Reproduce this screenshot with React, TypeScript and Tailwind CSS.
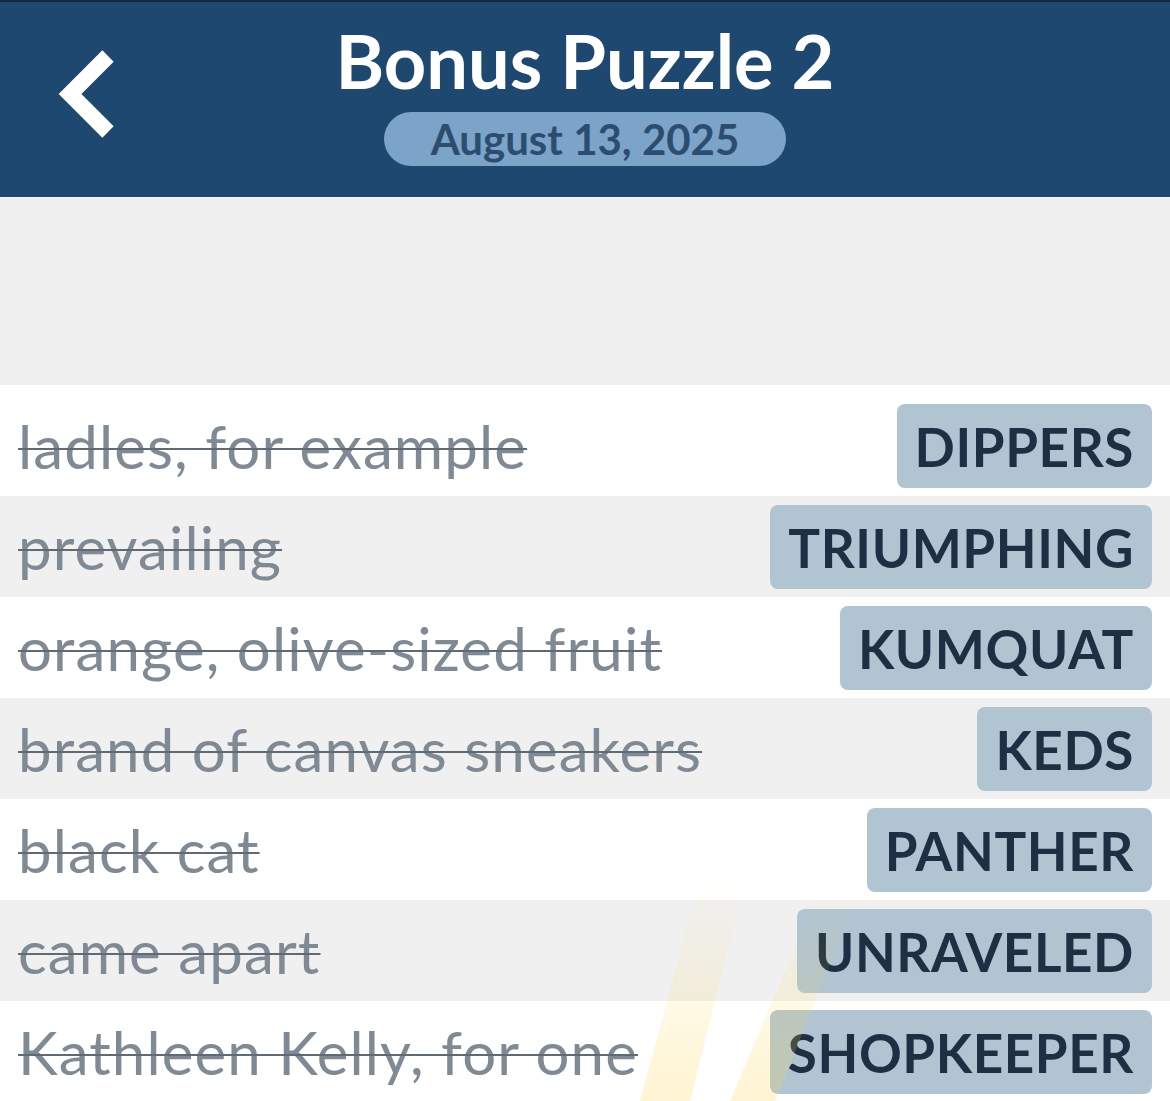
const clues = [
  { clue: "ladles, for example", answer: "DIPPERS" },
  { clue: "prevailing", answer: "TRIUMPHING" },
  { clue: "orange, olive-sized fruit", answer: "KUMQUAT" },
  { clue: "brand of canvas sneakers", answer: "KEDS" },
  { clue: "black cat", answer: "PANTHER" },
  { clue: "came apart", answer: "UNRAVELED" },
  { clue: "Kathleen Kelly, for one", answer: "SHOPKEEPER" },
];

const ClueRow = ({ clue, answer, index }: { clue: string; answer: string; index: number }) => {
  return (
    <div
      className={`flex items-center justify-between pl-[18px] pr-[18px] pb-2 ${index % 2 === 0 ? "bg-white" : "bg-[#f0f0f0]"
        } ${index === 0 ? "pt-[19px]" : "pt-[9px]"}`}
    >
      <span className="text-[60px] leading-none text-[#7f8a95] line-through decoration-[#5f6a75] decoration-2 tracking-[1.1px]">
        {clue}
      </span>
      <span className="h-[84px] flex items-center px-[18px] rounded-lg bg-[#b0c4d2] text-[#1d2f43] text-[53px] font-bold leading-none tracking-[0.6px]">
        {answer}
      </span>
    </div>
  );
};

export default function App() {
  return (
    <div className="relative w-[1170px] h-[1101px] overflow-hidden bg-[#f0f0f0] font-['Lato',sans-serif]">
      <header className="relative h-[197px] bg-[#1f4870] border-t-2 border-[#102a44] flex flex-col items-center">
        <button className="absolute left-[56px] top-[44px]">
          <svg width="66" height="96" viewBox="0 0 66 96" fill="none">
            <polyline points="52,10 14,48 52,86" stroke="white" strokeWidth="16" strokeLinejoin="miter" />
          </svg>
        </button>
        <h1 className="mt-[22px] text-[74px] leading-none font-bold text-white">Bonus Puzzle 2</h1>
        <div className="mt-[14px] w-[402px] h-[54px] rounded-full bg-[#7ba4c8] flex items-center justify-center text-[42px] font-bold text-[#2d4d6f] leading-none">
          August 13, 2025
        </div>
      </header>

      <div className="h-[188px]" />

      <div className="flex flex-col">
        {clues.map((c, i) => (
          <ClueRow key={c.clue} clue={c.clue} answer={c.answer} index={i} />
        ))}
      </div>

      <svg className="absolute left-0 top-[860px] pointer-events-none" width="1170" height="241" viewBox="0 0 1170 241">
        <defs>
          <linearGradient id="wm" x1="0" y1="0" x2="0" y2="1">
            <stop offset="0" stopColor="#ffd54a" stopOpacity="0" />
            <stop offset="1" stopColor="#ffd54a" stopOpacity="0.25" />
          </linearGradient>
        </defs>
        <polygon points="700,20 745,20 690,241 640,241" fill="url(#wm)" />
        <polygon points="820,30 860,30 775,241 730,241" fill="url(#wm)" />
      </svg>
    </div>
  );
}
